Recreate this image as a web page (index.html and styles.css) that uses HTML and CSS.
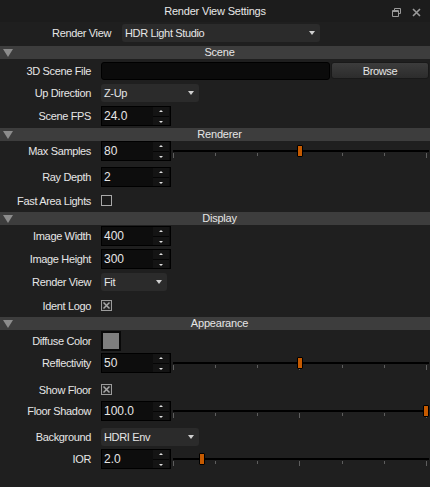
FILE: index.html
```html
<!DOCTYPE html>
<html>
<head>
<meta charset="utf-8">
<link rel="stylesheet" href="styles.css">
</head>
<body>
<div class="panel">
  <div class="titlebar">
    <span class="title">Render View Settings</span>
    <div class="win-btns">
      <svg width="9" height="9" viewBox="0 0 9 9"><path d="M2.5 0.5h6v5h-2M2.5 0.5v2M0.5 2.5h6v6h-6z M0.5 3.5h6" fill="none" stroke="#9a9a9a" stroke-width="1"/></svg>
      <svg width="9" height="9" viewBox="0 0 9 9"><path d="M1 1L8 8M8 1L1 8" stroke="#9a9a9a" stroke-width="1.6"/></svg>
    </div>
  </div>

  <div class="row top-row">
    <span class="lbl top-lbl">Render View</span>
    <div class="combo combo-wide"><span>HDR Light Studio</span><i class="arrow"></i></div>
  </div>

  <section class="group">
    <div class="group-head"><i class="tri"></i><span class="head-text">Scene</span></div>
    <div class="group-body">
      <div class="row r-file">
        <span class="lbl">3D Scene File</span>
        <div class="file-field"></div>
        <div class="btn">Browse</div>
      </div>
      <div class="row r-combo">
        <span class="lbl">Up Direction</span>
        <div class="combo combo-md"><span>Z-Up</span><i class="arrow"></i></div>
      </div>
      <div class="row r-spin r-last-scene">
        <span class="lbl">Scene FPS</span>
        <div class="spin"><span class="val">24.0</span><div class="spin-btns"><i class="up"></i><i class="down"></i></div></div>
      </div>
    </div>
  </section>

  <section class="group">
    <div class="group-head"><i class="tri"></i><span class="head-text">Renderer</span></div>
    <div class="group-body body-renderer">
      <div class="row r-spin">
        <span class="lbl">Max Samples</span>
        <div class="spin"><span class="val">80</span><div class="spin-btns"><i class="up"></i><i class="down"></i></div></div>
        <div class="slider"><div class="groove"></div><div class="ticks"><i class="major"></i><i></i><i></i><i></i><i></i><i></i><i class="major"></i></div><div class="handle" style="left:124px"></div></div>
      </div>
      <div class="row r-spin">
        <span class="lbl">Ray Depth</span>
        <div class="spin"><span class="val">2</span><div class="spin-btns"><i class="up"></i><i class="down"></i></div></div>
      </div>
      <div class="row r-check">
        <span class="lbl">Fast Area Lights</span>
        <div class="check"></div>
      </div>
    </div>
  </section>

  <section class="group">
    <div class="group-head"><i class="tri"></i><span class="head-text">Display</span></div>
    <div class="group-body body-display">
      <div class="row r-spin">
        <span class="lbl">Image Width</span>
        <div class="spin"><span class="val">400</span><div class="spin-btns"><i class="up"></i><i class="down"></i></div></div>
      </div>
      <div class="row r-spin">
        <span class="lbl">Image Height</span>
        <div class="spin"><span class="val">300</span><div class="spin-btns"><i class="up"></i><i class="down"></i></div></div>
      </div>
      <div class="row r-combo">
        <span class="lbl">Render View</span>
        <div class="combo combo-sm"><span>Fit</span><i class="arrow"></i></div>
      </div>
      <div class="row r-check r-check-d">
        <span class="lbl">Ident Logo</span>
        <div class="check checked"><svg width="11" height="11" viewBox="0 0 11 11"><rect x="0.5" y="0.5" width="10" height="10" fill="#262626" stroke="#9c9c9c"/><path d="M2.5 2.5L8.5 8.5M8.5 2.5L2.5 8.5" stroke="#a8a8a8" stroke-width="1.5"/></svg></div>
      </div>
    </div>
  </section>

  <section class="group">
    <div class="group-head"><i class="tri"></i><span class="head-text">Appearance</span></div>
    <div class="group-body body-appearance">
      <div class="row r-spin r-swatch">
        <span class="lbl">Diffuse Color</span>
        <div class="swatch"></div>
      </div>
      <div class="row r-spin r-refl">
        <span class="lbl">Reflectivity</span>
        <div class="spin"><span class="val">50</span><div class="spin-btns"><i class="up"></i><i class="down"></i></div></div>
        <div class="slider"><div class="groove"></div><div class="ticks"><i class="major"></i><i></i><i></i><i class="major"></i><i></i><i></i><i class="major"></i></div><div class="handle" style="left:124px"></div></div>
      </div>
      <div class="row r-check r-check-a">
        <span class="lbl">Show Floor</span>
        <div class="check checked"><svg width="11" height="11" viewBox="0 0 11 11"><rect x="0.5" y="0.5" width="10" height="10" fill="#262626" stroke="#9c9c9c"/><path d="M2.5 2.5L8.5 8.5M8.5 2.5L2.5 8.5" stroke="#a8a8a8" stroke-width="1.5"/></svg></div>
      </div>
      <div class="row r-spin r-shadow">
        <span class="lbl">Floor Shadow</span>
        <div class="spin"><span class="val">100.0</span><div class="spin-btns"><i class="up"></i><i class="down"></i></div></div>
        <div class="slider"><div class="groove"></div><div class="ticks"><i class="major"></i><i></i><i></i><i class="major"></i><i></i><i></i><i class="major"></i></div><div class="handle" style="left:250px"></div></div>
      </div>
      <div class="row r-combo r-bg">
        <span class="lbl">Background</span>
        <div class="combo combo-md"><span>HDRI Env</span><i class="arrow"></i></div>
      </div>
      <div class="row r-spin r-ior">
        <span class="lbl">IOR</span>
        <div class="spin"><span class="val">2.0</span><div class="spin-btns"><i class="up"></i><i class="down"></i></div></div>
        <div class="slider"><div class="groove"></div><div class="ticks"><i class="major"></i><i></i><i></i><i class="major"></i><i></i><i></i><i class="major"></i></div><div class="handle" style="left:26px"></div></div>
      </div>
    </div>
  </section>
</div>
</body>
</html>
```
FILE: styles.css
```css
* { box-sizing: border-box; }
html, body {
  margin: 0;
  padding: 0;
  background: #1f1f1f;
}
body {
  font-family: "Liberation Sans", Arial, sans-serif;
  font-size: 11px;
  letter-spacing: -0.35px;
  color: #e6e6e6;
}
.panel {
  width: 430px;
  height: 487px;
  background: #1f1f1f;
  overflow: hidden;
}
.titlebar {
  height: 22px;
  position: relative;
  display: flex;
  align-items: center;
  justify-content: center;
  background: #1c1c1c;
}
.title {
  font-size: 11px;
  letter-spacing: -0.2px;
  color: #e8e8e8;
}
.win-btns {
  position: absolute;
  right: 9px;
  top: 8px;
  display: flex;
  gap: 11px;
}
.row {
  display: flex;
  align-items: center;
}
.lbl {
  width: 91px;
  margin-right: 10px;
  text-align: right;
  white-space: nowrap;
  flex: none;
}
.top-row {
  height: 18px;
  margin-top: 2px;
  margin-bottom: 4px;
}
.top-lbl {
  width: 111px;
  margin-right: 11px;
}
.combo {
  height: 18px;
  background: #2b2b2b;
  border-radius: 3px;
  display: flex;
  align-items: center;
  justify-content: space-between;
  padding: 0 5px 0 3px;
  flex: none;
}
.combo-wide { width: 198px; }
.combo-md { width: 98px; }
.combo-sm { width: 66px; }
.arrow {
  width: 0;
  height: 0;
  border-left: 3.5px solid transparent;
  border-right: 3.5px solid transparent;
  border-top: 4px solid #d0d0d0;
}
.group-head {
  height: 13px;
  background: #3d3d3d;
  display: flex;
  align-items: center;
  padding-left: 3px;
}
.tri {
  width: 0;
  height: 0;
  border-left: 5px solid transparent;
  border-right: 5px solid transparent;
  border-top: 8px solid #8c8c8c;
  flex: none;
}
.head-text {
  flex: 1;
  text-align: center;
  padding-right: 4px;
  line-height: 13px;
  letter-spacing: -0.2px;
}
.group-body {
  display: flex;
  flex-direction: column;
}
.r-file { height: 18px; margin-top: 3px; }
.r-combo { height: 18px; margin-top: 4px; }
.r-spin { height: 20px; margin-top: 4px; }
.r-last-scene { margin-bottom: 2px; }
.file-field {
  width: 229px;
  height: 18px;
  background: #0b0b0b;
  border: 1px solid #000;
  border-radius: 3px;
  flex: none;
}
.btn {
  width: 98px;
  height: 17px;
  margin-left: 1px;
  background: linear-gradient(#3c3c3c, #2c2c2c);
  border: 1px solid #191919;
  border-radius: 3px;
  display: flex;
  align-items: center;
  justify-content: center;
  flex: none;
  align-self: flex-start;
}
.spin {
  width: 70px;
  height: 20px;
  background: #0d0d0d;
  border: 1px solid #000;
  display: flex;
  align-items: center;
  justify-content: space-between;
  padding-left: 2px;
  flex: none;
}
.val { font-size: 12px; letter-spacing: 0; }
.spin-btns {
  width: 16px;
  height: 18px;
  margin-right: 1px;
  display: flex;
  flex-direction: column;
  gap: 1px;
  background: #050505;
}
.spin-btns i {
  flex: 1;
  background: #141414;
  position: relative;
}
.spin-btns i::after {
  content: "";
  position: absolute;
  left: 6px;
  width: 0;
  height: 0;
  border-left: 2px solid transparent;
  border-right: 2px solid transparent;
}
.spin-btns .up::after {
  top: 3px;
  border-bottom: 2px solid #e0e0e0;
}
.spin-btns .down::after {
  top: 4px;
  border-top: 2px solid #e0e0e0;
}
.slider {
  position: relative;
  height: 20px;
  margin-left: 2px;
  flex: 1;
  margin-right: 1px;
}
.groove {
  position: absolute;
  left: 0;
  right: 0;
  top: 9px;
  height: 2px;
  background: #000;
}
.ticks {
  position: absolute;
  left: 0;
  right: 2px;
  top: 12px;
  display: flex;
  justify-content: space-between;
}
.ticks i {
  width: 1px;
  height: 3px;
  background: #5e5e5e;
}
.ticks i.major { height: 5px; }
.handle {
  position: absolute;
  top: 4px;
  width: 6px;
  height: 12px;
  background: #c65a00;
  border: 1px solid #000;
  border-radius: 1px;
}
.body-renderer .r-spin:first-child { margin-top: 0; }
.body-renderer .r-spin + .r-spin { margin-top: 6px; }
.r-check { height: 15px; margin-top: 6px; }
.body-renderer { padding-bottom: 4px; }
.check {
  width: 11px;
  height: 11px;
  border: 1px solid #a8a8a8;
  background: #1a1a1a;
  flex: none;
}
.check.checked {
  border: none;
  background: none;
}
.check svg { display: block; }
.body-display .r-spin:first-child { margin-top: 1px; }
.body-display .r-spin + .r-spin { margin-top: 3px; }
.r-check-d { margin-top: 7px; }
.body-display { padding-bottom: 4px; }
.r-swatch { margin-top: 1px; }
.swatch {
  width: 20px;
  height: 20px;
  border: 2px solid #080808;
  background: #7e7e7e;
  flex: none;
}
.r-refl { margin-top: 2px; }
.r-check-a { margin-top: 9px; }
.r-shadow { margin-top: 4px; }
.r-bg { margin-top: 7px; }
.r-ior { margin-top: 3px; }
```
